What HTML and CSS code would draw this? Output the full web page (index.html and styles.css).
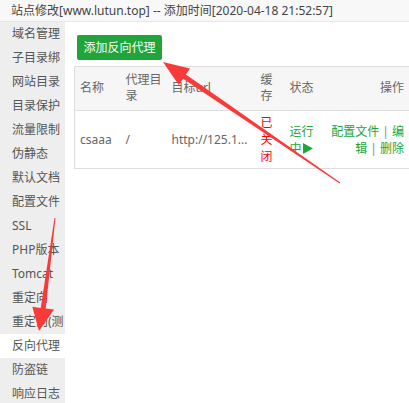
FILE: index.html
```html
<!DOCTYPE html>
<html lang="zh-CN">
<head>
<meta charset="utf-8">
<title>站点修改</title>
<link rel="stylesheet" href="styles.css">
</head>
<body>
<div class="window">
  <div class="title">站点修改[www.lutun.top] -- 添加时间[2020-04-18 21:52:57]</div>
  <div class="main">
    <ul class="menu">
      <li>域名管理</li>
      <li>子目录绑</li>
      <li>网站目录</li>
      <li>目录保护</li>
      <li>流量限制</li>
      <li>伪静态</li>
      <li>默认文档</li>
      <li>配置文件</li>
      <li>SSL</li>
      <li>PHP版本</li>
      <li>Tomcat</li>
      <li>重定向</li>
      <li>重定向(测</li>
      <li class="active">反向代理</li>
      <li>防盗链</li>
      <li>响应日志</li>
    </ul>
    <div class="content">
      <button class="btn">添加反向代理</button>
      <table class="grid">
        <colgroup>
          <col class="c1"><col class="c2"><col class="c3"><col class="c4"><col class="c5"><col class="c6">
        </colgroup>
        <thead>
          <tr>
            <th>名称</th>
            <th>代理目录</th>
            <th>目标url</th>
            <th>缓存</th>
            <th>状态</th>
            <th class="right">操作</th>
          </tr>
        </thead>
        <tbody>
          <tr>
            <td>csaaa</td>
            <td>/</td>
            <td class="nowrap">http://125.1...</td>
            <td class="red">已关闭</td>
            <td class="green">运行中<svg class="play" width="10" height="11" viewBox="0 0 10 11"><polygon points="0,0 10,5.5 0,11" fill="#20a53a"/></svg></td>
            <td class="right ops">配置文件 <span class="sep">|</span> 编辑 <span class="sep">|</span> 删除</td>
          </tr>
        </tbody>
      </table>
    </div>
  </div>
  <svg class="annot" width="409" height="403" viewBox="0 0 409 403">
    <polygon fill="#f93a3a" points="163,62 190,68.4 185.9,74.6 340.3,182.6 339.7,183.4 183.1,78.8 178.8,85"/>
    <polygon fill="#f93a3a" points="39,331 54.1,309.6 45.7,308.5 55.5,218.1 54.5,217.9 40.7,307.9 32.3,306.8"/>
  </svg>
</div>
</body>
</html>
```

FILE: styles.css
```css
html, body {
  margin: 0;
  padding: 0;
  background: #fff;
}

.window {
  position: relative;
  width: 409px;
  height: 403px;
  overflow: hidden;
  font-family: "Noto Sans", "Noto Sans CJK SC", sans-serif;
  font-size: 12px;
  color: #555;
}

.title {
  height: 21px;
  line-height: 21px;
  padding-left: 11px;
  background: #f8f8f8;
  border-bottom: 1px solid #e6e6e6;
  color: #444;
  white-space: nowrap;
  overflow: hidden;
}

.main {
  display: flex;
  height: 381px;
}

.menu {
  list-style: none;
  margin: 0;
  padding: 0;
  width: 65px;
  flex: none;
  background: #eee;
}

.menu li {
  height: 24px;
  line-height: 24px;
  padding-left: 12px;
  white-space: nowrap;
  overflow: hidden;
  color: #555;
}

.menu li.active {
  background: #fff;
}

.content {
  flex: 1;
  padding: 13px 0 0 9px;
  overflow: hidden;
}

.btn {
  display: block;
  margin: 0 0 6px 3px;
  height: 25px;
  width: 85px;
  padding: 0;
  border: none;
  border-radius: 2px;
  background: #20a53a;
  color: #fff;
  font-family: inherit;
  font-size: 12px;
  line-height: 25px;
  text-align: center;
}

.grid {
  border-collapse: collapse;
  table-layout: fixed;
  width: 340px;
  border: 1px solid #ddd;
}

.c1 { width: 46px; }
.c2 { width: 46px; }
.c3 { width: 89px; }
.c4 { width: 29px; }
.c5 { width: 44px; }
.c6 { width: 86px; }

.grid th {
  background: #f6f6f6;
  font-weight: normal;
  color: #666;
  text-align: left;
  line-height: 16px;
  padding: 5px 5px 6px;
  border-bottom: 1px solid #ddd;
  vertical-align: middle;
}

.grid td {
  color: #666;
  line-height: 17px;
  padding: 3px 5px;
  border-bottom: 1px solid #ddd;
  vertical-align: middle;
}

.grid th.right, .grid td.right {
  text-align: right;
  padding-right: 10px;
}

.grid td.ops {
  padding-left: 0;
  color: #20a53a;
}

.nowrap {
  white-space: nowrap;
  overflow: hidden;
}

.red {
  color: #f00 !important;
}

.green {
  color: #20a53a !important;
}

.sep {
  color: #888;
}

.play {
  vertical-align: -1px;
  margin-left: 1px;
}

.annot {
  position: absolute;
  left: 0;
  top: 0;
  pointer-events: none;
}
```
